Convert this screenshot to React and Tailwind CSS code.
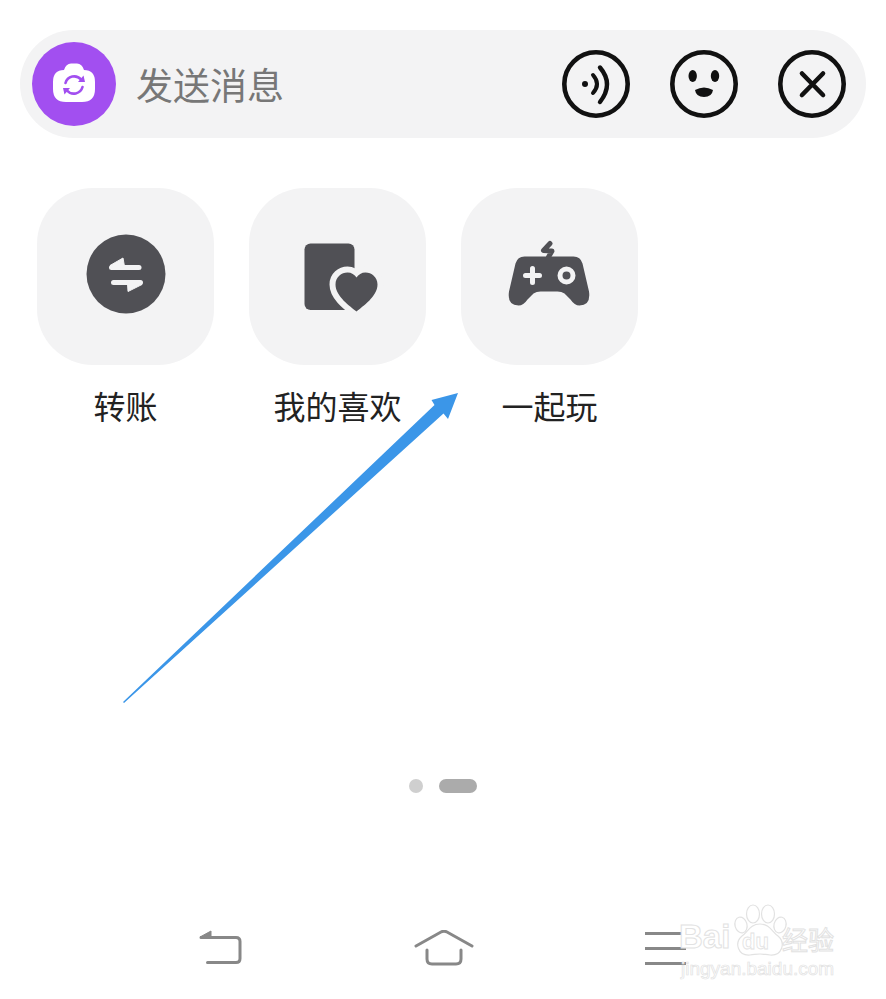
const DARK = "#505055";
const cjk = { fontFamily: '"Noto Sans CJK SC", "Noto Sans", sans-serif' };

function Round({ children }) {
  return (
    <svg viewBox="0 0 68 68" className="w-[68px] h-[68px] shrink-0" fill="none">
      <circle cx="34" cy="34" r="31.7" stroke="#111" strokeWidth="4.6" />
      {children}
    </svg>
  );
}

function Tile({ label, children }) {
  return (
    <div className="flex flex-col items-center w-[177px]">
      <div className="w-[177px] h-[177px] rounded-[56px] bg-[#f3f3f4] flex items-center justify-center">
        {children}
      </div>
      <div className="mt-[20px] text-[32px] leading-[40px] text-[#222] whitespace-nowrap">{label}</div>
    </div>
  );
}

export default function App() {
  return (
    <div className="relative w-[886px] h-[999px] bg-white overflow-hidden flex flex-col pt-[30px]" style={cjk}>
      {/* input bar */}
      <div className="mx-5 h-[108px] rounded-[54px] bg-[#f3f3f4] flex items-center pl-3 pr-[20px]">
        <svg viewBox="0 0 84 84" className="w-[84px] h-[84px] shrink-0">
          <circle cx="42" cy="42" r="42" fill="#a24ff0" />
          <path
            d="M32 28 Q34 21.5 39 21.5 L45 21.5 Q50 21.5 52 28 Q63 28 63 40 L63 47 Q63 60 50 60 L34 60 Q21 60 21 47 L21 40 Q21 28 32 28 Z"
            fill="#fff"
          />
          <path d="M33.5 41 A9 9 0 0 1 49 37.5" fill="none" stroke="#a24ff0" strokeWidth="2.6" strokeLinecap="round" />
          <path d="M50.5 45 A9 9 0 0 1 35 48.5" fill="none" stroke="#a24ff0" strokeWidth="2.6" strokeLinecap="round" />
          <path d="M46 40 L53 40 L51.5 33.5 Z" fill="#a24ff0" />
          <path d="M38 46 L31 46 L32.5 52.5 Z" fill="#a24ff0" />
        </svg>
        <div className="ml-5 text-[37px] leading-none text-[#777] flex-1">发送消息</div>
        <div className="flex items-center gap-[40px]">
          <Round>
            <circle cx="23" cy="34" r="3" fill="#111" />
            <path d="M31 25 Q39 34 31 43" stroke="#111" strokeWidth="4" strokeLinecap="round" />
            <path d="M38 17.5 Q52 34 38 52" stroke="#111" strokeWidth="4.4" strokeLinecap="round" />
          </Round>
          <Round>
            <ellipse cx="22.7" cy="26" rx="4.2" ry="6" fill="#111" />
            <ellipse cx="45" cy="26" rx="4.2" ry="6" fill="#111" />
            <path d="M25 40 Q34 35 43 40 Q42 47 34 47 Q26 47 25 40 Z" fill="#111" />
          </Round>
          <Round>
            <path d="M24 23.5 L45 45 M45 23.5 L24 45" stroke="#111" strokeWidth="4.6" strokeLinecap="round" />
          </Round>
        </div>
      </div>

      {/* shortcuts */}
      <div className="flex gap-[35px] ml-[37px] mt-[50px]">
        <Tile label="转账">
          <svg viewBox="75.5 226.5 100 100" className="w-[100px] h-[100px]">
            <circle cx="125.5" cy="273.5" r="39.5" fill={DARK} />
            <path d="M111 267 L138.5 267" stroke="#f3f3f4" strokeWidth="5" strokeLinecap="round" />
            <path d="M109.5 265 L122.5 257.5 L124 266 Z" fill="#f3f3f4" stroke="#f3f3f4" strokeLinejoin="round" />
            <path d="M113 282 L140 282" stroke="#f3f3f4" strokeWidth="5" strokeLinecap="round" />
            <path d="M141.5 284 L127.5 291 L127 283 Z" fill="#f3f3f4" stroke="#f3f3f4" strokeLinejoin="round" />
          </svg>
        </Tile>
        <Tile label="我的喜欢">
          <svg viewBox="287.5 226.5 100 100" className="w-[100px] h-[100px]">
            <rect x="304" y="243" width="50" height="66.5" rx="6" fill={DARK} />
            <path
              d="M356 311 C350 306 335 296 335 284 C335 276.5 341 272 347 272 C351 272 354 274 356 277 C358 274 361 272 365 272 C371 272 377 276.5 377 284 C377 296 362 306 356 311 Z"
              fill={DARK}
              stroke="#f3f3f4"
              strokeWidth="12"
              strokeLinejoin="round"
              paintOrder="stroke"
            />
          </svg>
        </Tile>
        <Tile label="一起玩">
          <svg viewBox="499.5 226.5 100 100" className="w-[100px] h-[100px]">
            <path d="M549.5 243 L543 250 L551.5 250.5 L548 256.5" fill="none" stroke={DARK} strokeWidth="5" strokeLinecap="round" strokeLinejoin="round" />
            <path
              d="M524 256 L573 256 Q580 256 582 263 L588.5 291 Q590.5 305 579 305 Q574 305 570 299 L564 293 Q561 291 557 291 L540 291 Q536 291 533 293 L527 299 Q523 305 518 305 Q506.5 305 508.5 291 L515 263 Q517 256 524 256 Z"
              fill={DARK}
            />
            <path d="M532 268 L532 282 M525 275 L539 275" stroke="#f3f3f4" strokeWidth="5" strokeLinecap="round" />
            <circle cx="566" cy="275" r="6.5" fill="none" stroke="#f3f3f4" strokeWidth="5" />
          </svg>
        </Tile>
      </div>

      {/* pager */}
      <div className="flex items-center gap-[16px] ml-[409px] mt-[354px]">
        <div className="w-[14px] h-[14px] rounded-full bg-[#cfcfcf]" />
        <div className="w-[38px] h-[14px] rounded-full bg-[#ababab]" />
      </div>

      {/* nav */}
      <div className="flex items-start ml-[199px] mt-[137px]">
        <svg viewBox="0 0 44 36" className="w-[44px] h-[36px]" fill="none">
          <path d="M1 7 L12 1 L12 7 Z" fill="#888" stroke="#888" strokeWidth="1" strokeLinejoin="round" />
          <path d="M2 7.5 L37 7.5 Q41 7.5 41 11.5 L41 28.5 Q41 32.5 37 32.5 L8.5 32.5" stroke="#888" strokeWidth="3" strokeLinecap="round" />
        </svg>
        <svg viewBox="0 0 60 36" className="w-[60px] h-[36px] ml-[171px]" fill="none">
          <path d="M2 16 L27 2 Q30 0.5 33 2 L58 16" stroke="#888" strokeWidth="3" strokeLinecap="round" />
          <path d="M13 20 L13 29 Q13 34 18 34 L42 34 Q47 34 47 29 L47 20" stroke="#888" strokeWidth="3" strokeLinecap="round" />
        </svg>
        <div className="ml-[171px] mt-[2px] w-[41px] flex flex-col gap-[12px]">
          <div className="h-[3px] bg-[#888]" />
          <div className="h-[3px] bg-[#888]" />
          <div className="h-[3px] bg-[#888]" />
        </div>
      </div>

      {/* arrow annotation */}
      <svg viewBox="0 0 886 999" className="absolute inset-0 w-[886px] h-[999px] pointer-events-none">
        <path d="M123 702 L434.5 405 L431.5 400 L458 393 L448 419 L443.5 413.5 L124 703 Z" fill="#3b96e8" />
      </svg>

      {/* watermark */}
      <div className="absolute left-[678px] top-[903px] w-[160px] h-[80px] text-white">
        <svg viewBox="0 0 60 52" className="absolute left-[52px] top-[1px] w-[60px] h-[52px]" fill="#fff" stroke="#e2e2e2" strokeWidth="1.2">
          <ellipse cx="11" cy="21" rx="6" ry="8" transform="rotate(-15 11 21)" />
          <ellipse cx="23" cy="10" rx="6.5" ry="9" />
          <ellipse cx="38" cy="10" rx="6.5" ry="9" />
          <ellipse cx="50" cy="21" rx="6" ry="8" transform="rotate(15 50 21)" />
          <path d="M30 20 C40 20 42 28 48 32 C56 39 52 52 40 51 C35 50.5 33 50 30 50 C27 50 25 50.5 20 51 C8 52 4 39 12 32 C18 28 20 20 30 20 Z" />
        </svg>
        <div className="absolute left-[1px] top-[14px] text-[33px] leading-[40px] font-bold whitespace-nowrap [-webkit-text-stroke:1px_#e2e2e2]" style={{ fontFamily: '"Liberation Sans", sans-serif' }}>Bai</div>
        <div className="absolute left-[64px] top-[26px] text-[22px] leading-[26px] font-bold whitespace-nowrap [-webkit-text-stroke:0.8px_#e2e2e2]" style={{ fontFamily: '"Liberation Sans", sans-serif' }}>du</div>
        <div className="absolute left-[104px] top-[20px] text-[26px] leading-[32px] whitespace-nowrap [-webkit-text-stroke:1px_#e2e2e2]">经验</div>
        <div className="absolute left-[3px] top-[54px] text-[19px] leading-[24px] whitespace-nowrap [-webkit-text-stroke:0.7px_#e2e2e2]" style={{ fontFamily: '"Liberation Sans", sans-serif' }}>jingyan.baidu.com</div>
      </div>
    </div>
  );
}
